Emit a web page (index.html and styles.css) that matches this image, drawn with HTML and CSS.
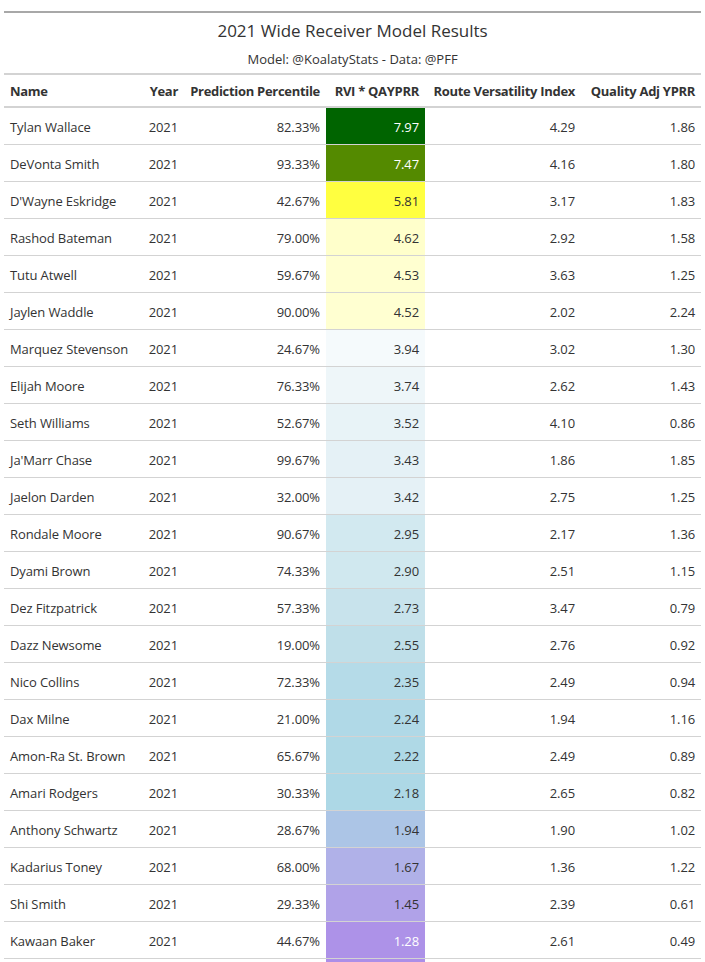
FILE: index.html
```html
<!DOCTYPE html>
<html>
<head>
<meta charset="utf-8">
<link rel="stylesheet" href="styles.css">
</head>
<body>
<div class="wrap">
<table class="gt">
<colgroup>
<col class="c-name"><col class="c-year"><col class="c-pred"><col class="c-rvi"><col class="c-route"><col class="c-qual">
</colgroup>
<thead>
<tr class="title-row"><th colspan="6" class="title">2021 Wide Receiver Model Results</th></tr>
<tr class="sub-row"><th colspan="6" class="subtitle">Model: @KoalatyStats - Data: @PFF</th></tr>
<tr class="labels">
<th class="left">Name</th><th>Year</th><th>Prediction Percentile</th><th>RVI * QAYPRR</th><th>Route Versatility Index</th><th>Quality Adj YPRR</th>
</tr>
</thead>
<tbody>
<tr><td class="left">Tylan Wallace</td><td>2021</td><td>82.33%</td><td class="rvi light" style="background:#006400">7.97</td><td>4.29</td><td>1.86</td></tr>
<tr><td class="left">DeVonta Smith</td><td>2021</td><td>93.33%</td><td class="rvi light" style="background:#548a00">7.47</td><td>4.16</td><td>1.80</td></tr>
<tr><td class="left">D'Wayne Eskridge</td><td>2021</td><td>42.67%</td><td class="rvi" style="background:#ffff40">5.81</td><td>3.17</td><td>1.83</td></tr>
<tr><td class="left">Rashod Bateman</td><td>2021</td><td>79.00%</td><td class="rvi" style="background:#ffffcb">4.62</td><td>2.92</td><td>1.58</td></tr>
<tr><td class="left">Tutu Atwell</td><td>2021</td><td>59.67%</td><td class="rvi" style="background:#ffffd0">4.53</td><td>3.63</td><td>1.25</td></tr>
<tr><td class="left">Jaylen Waddle</td><td>2021</td><td>90.00%</td><td class="rvi" style="background:#ffffd1">4.52</td><td>2.02</td><td>2.24</td></tr>
<tr><td class="left">Marquez Stevenson</td><td>2021</td><td>24.67%</td><td class="rvi" style="background:#f5fafc">3.94</td><td>3.02</td><td>1.30</td></tr>
<tr><td class="left">Elijah Moore</td><td>2021</td><td>76.33%</td><td class="rvi" style="background:#eef6f9">3.74</td><td>2.62</td><td>1.43</td></tr>
<tr><td class="left">Seth Williams</td><td>2021</td><td>52.67%</td><td class="rvi" style="background:#e8f3f7">3.52</td><td>4.10</td><td>0.86</td></tr>
<tr><td class="left">Ja'Marr Chase</td><td>2021</td><td>99.67%</td><td class="rvi" style="background:#e5f1f6">3.43</td><td>1.86</td><td>1.85</td></tr>
<tr><td class="left">Jaelon Darden</td><td>2021</td><td>32.00%</td><td class="rvi" style="background:#e5f1f6">3.42</td><td>2.75</td><td>1.25</td></tr>
<tr><td class="left">Rondale Moore</td><td>2021</td><td>90.67%</td><td class="rvi" style="background:#d2e9f0">2.95</td><td>2.17</td><td>1.36</td></tr>
<tr><td class="left">Dyami Brown</td><td>2021</td><td>74.33%</td><td class="rvi" style="background:#d0e8ef">2.90</td><td>2.51</td><td>1.15</td></tr>
<tr><td class="left">Dez Fitzpatrick</td><td>2021</td><td>57.33%</td><td class="rvi" style="background:#c8e3ec">2.73</td><td>3.47</td><td>0.79</td></tr>
<tr><td class="left">Dazz Newsome</td><td>2021</td><td>19.00%</td><td class="rvi" style="background:#bfdfe9">2.55</td><td>2.76</td><td>0.92</td></tr>
<tr><td class="left">Nico Collins</td><td>2021</td><td>72.33%</td><td class="rvi" style="background:#b5dbe8">2.35</td><td>2.49</td><td>0.94</td></tr>
<tr><td class="left">Dax Milne</td><td>2021</td><td>21.00%</td><td class="rvi" style="background:#b0d9e7">2.24</td><td>1.94</td><td>1.16</td></tr>
<tr><td class="left">Amon-Ra St. Brown</td><td>2021</td><td>65.67%</td><td class="rvi" style="background:#afd9e6">2.22</td><td>2.49</td><td>0.89</td></tr>
<tr><td class="left">Amari Rodgers</td><td>2021</td><td>30.33%</td><td class="rvi" style="background:#add8e6">2.18</td><td>2.65</td><td>0.82</td></tr>
<tr><td class="left">Anthony Schwartz</td><td>2021</td><td>28.67%</td><td class="rvi" style="background:#acc5e6">1.94</td><td>1.90</td><td>1.02</td></tr>
<tr><td class="left">Kadarius Toney</td><td>2021</td><td>68.00%</td><td class="rvi" style="background:#b0b1e8">1.67</td><td>1.36</td><td>1.22</td></tr>
<tr><td class="left">Shi Smith</td><td>2021</td><td>29.33%</td><td class="rvi" style="background:#b0a2e8">1.45</td><td>2.39</td><td>0.61</td></tr>
<tr><td class="left">Kawaan Baker</td><td>2021</td><td>44.67%</td><td class="rvi light" style="background:#ad92e8">1.28</td><td>2.61</td><td>0.49</td></tr>
<tr><td class="left"></td><td></td><td></td><td class="rvi" style="background:#ac8ee8"></td><td></td><td></td></tr>
</tbody>
</table>
</div>
</body>
</html>
```
FILE: styles.css
```css
html, body {
  margin: 0;
  padding: 0;
  background: #ffffff;
}
.wrap {
  padding: 11px 0 0 4px;
}
.gt {
  width: 697px;
  table-layout: fixed;
  border-collapse: collapse;
  font-family: "Open Sans", "Segoe UI", sans-serif;
  font-size: 13px;
  color: #333333;
  border-top: 2px solid #a8a8a8;
}
.c-name { width: 138px; }
.c-year { width: 42px; }
.c-pred { width: 142px; }
.c-rvi { width: 99px; }
.c-route { width: 156px; }
.c-qual { width: 120px; }

.title {
  font-size: 17px;
  font-weight: 400;
  text-align: center;
  padding: 8px 0 0 0;
  height: 20px;
  line-height: 20px;
}
.subtitle {
  font-size: 13px;
  font-weight: 400;
  text-align: center;
  padding: 9px 0 5px 0;
  line-height: 18px;
  border-bottom: 2px solid #d3d3d3;
}
.labels th {
  font-weight: 700;
  text-align: right;
  padding: 7px 6px 6px 6px;
  line-height: 18px;
  letter-spacing: -0.3px;
  white-space: nowrap;
  border-bottom: 2px solid #d3d3d3;
}
td {
  text-align: right;
  padding: 2px 6px 0 6px;
  height: 34px;
  line-height: 18px;
  letter-spacing: -0.1px;
  border-top: 1px solid #d3d3d3;
  white-space: nowrap;
}
.gt .left {
  text-align: left;
}
.rvi {
  color: #333333;
}
.rvi.light {
  color: #ffffff;
}
```
